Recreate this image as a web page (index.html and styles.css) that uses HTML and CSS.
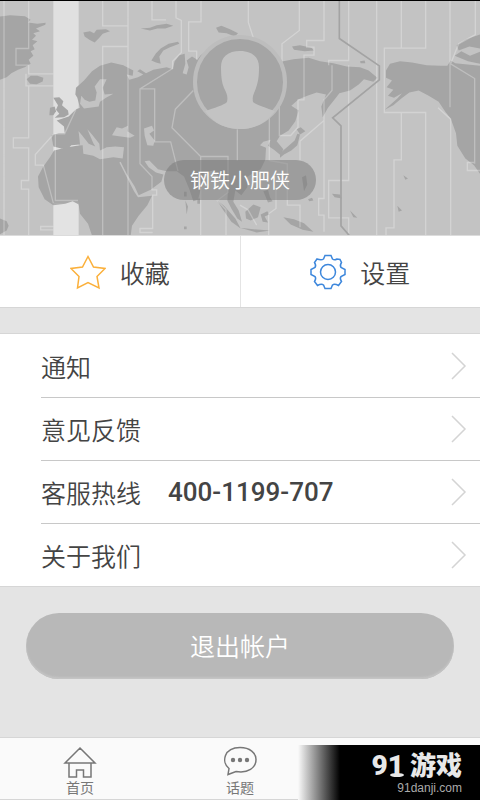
FILE: index.html
```html
<!DOCTYPE html>
<html lang="zh-CN">
<head>
  <meta charset="UTF-8">
  <meta name="viewport" content="width=device-width, initial-scale=1.0">
  <title>个人中心</title>
  <link rel="stylesheet" href="styles.css">
</head>
<body>

  <header class="profile">
    <svg class="map" viewBox="0 0 1440 705" preserveAspectRatio="xMidYMid slice" aria-hidden="true">
      <rect class="sea" width="1440" height="705"/>
      <rect class="band" x="160" width="76" height="705"/>
      <!-- land -->
      <g class="land">
        <path d="M0 48L30 44L75 47L92 58L84 66L112 70L137 67L136 73L108 84L120 92L100 98L108 106L96 118L112 122L98 134L104 146L92 152L100 166L86 178L92 190L74 200L54 208L34 218L20 230L0 238Z"/>
        <path d="M80 236L92 226L112 226L130 232L128 243L110 251L90 250Z"/>
        <path d="M0 654L20 662L26 676L20 690L0 701Z"/>
        <path d="M250 96L270 92L282 98L290 88L318 86L330 92L308 100L298 112L284 126L268 118L254 108Z"/>
        <path d="M422 84L450 82L470 74L500 70L520 76L496 84L472 84L450 90Z"/>
        <path d="M454 180L468 158L482 144L506 130L534 124L538 130L510 140L490 150L478 168L482 190L468 186Z"/>
        <path d="M648 82L664 76L690 86L714 98L704 108L680 98L656 96Z"/>
        <path d="M160 292L178 290L190 302L186 314L204 330L206 342L192 350L164 352L178 340L168 328L174 314Z"/>
        <path d="M150 322L164 318L168 332L160 344L148 344Z"/>
        <path d="M228 262L252 240L276 212L300 196L334 186L370 194L400 210L398 226L380 222L388 238L414 230L430 222L412 212L420 206L438 218L460 208L500 200L518 206L524 182L538 164L554 160L556 190L548 218L560 222L566 200L560 180L576 168L592 178L602 164L622 150L660 132L700 122L724 126L756 130L770 150L806 160L822 172L842 184L880 176L926 172L960 182L1000 188L1040 198L1080 200L1106 210L1132 232L1120 244L1092 236L1076 252L1050 270L1018 278L1006 294L984 322L968 350L964 318L978 282L950 276L922 286L896 296L874 316L896 330L886 362L866 390L840 406L830 422L850 446L842 464L822 448L804 436L812 418L790 424L780 434L798 442L796 478L782 506L756 520L740 530L742 560L724 584L706 570L700 604L716 630L726 664L712 654L694 624L682 600L684 566L664 536L640 510L612 516L606 552L594 598L580 602L568 566L552 528L530 512L500 512L474 506L448 480L434 482L446 500L468 516L490 522L484 544L452 568L416 584L404 558L380 520L362 484L358 486L402 572L414 590L456 586L442 614L416 646L396 676L392 705L276 705L264 670L240 640L236 612L218 602L196 610L160 614L134 596L116 560L114 528L130 498L150 470L162 450L196 442L230 436L248 434L250 460L280 466L300 476L340 470L368 474L372 440L346 438L320 440L300 450L298 430L276 402L262 386L280 428L286 438L266 430L246 404L236 392L240 432L214 434L208 440L184 444L160 438L154 404L176 398L194 398L192 378L170 360L206 348L228 326L240 322L232 292L226 282Z"/>
        <path d="M876 138L900 134L934 142L942 150L914 152L882 148ZM1080 182L1094 180L1096 188L1082 188Z"/>
        <path d="M840 458L866 436L884 420L892 400L900 402L892 434L874 450L852 462L840 472ZM890 386L902 380L916 392L900 402Z"/>
        <path d="M1158 210L1170 190L1200 182L1236 186L1280 194L1322 196L1342 196L1352 180L1366 188L1440 196V520L1422 494L1396 474L1372 436L1368 398L1352 354L1336 334L1316 304L1286 286L1256 270L1228 276L1204 294L1180 314L1154 328L1192 294L1206 278L1182 292L1164 286L1180 268L1160 260L1176 240L1158 232Z"/>
        <path d="M1370 134L1398 116L1440 102V144L1408 138L1376 150ZM1364 166L1384 152L1410 166L1440 154V190L1404 182Z"/>
        <path d="M650 598L672 616L706 654L722 684L694 664L668 626ZM736 634L760 612L782 620L774 650L752 660L738 654ZM782 642L802 632L808 642L794 648L804 666L788 664ZM850 650L882 656L912 668L940 694L908 688L872 672ZM720 682L760 686L810 690L770 696ZM790 572L804 568L810 590L818 602L804 606ZM924 596L936 592L940 600L928 602Z"/>
        <path d="M1210 524L1224 534L1216 538ZM1192 616L1206 630L1196 634ZM1050 630L1072 652L1060 650ZM996 580L1020 582L1026 594L1004 590ZM552 574H560V588H552ZM556 600L564 618L560 642ZM592 594H600V610H592ZM552 678H560V686H552ZM906 530L918 524L922 552L912 572Z"/>
      </g>
      <!-- inland seas -->
      <g class="sea">
        <path d="M244 286L254 298L268 304L286 300L290 276L284 258L300 236L320 236L308 262L314 282L340 280L318 292L300 304L296 318L252 324L240 310Z"/>
        <path d="M336 404L350 380L366 384L384 376L382 392L404 406L390 412L362 408Z"/>
        <path d="M432 384L456 376L462 390L448 400L464 420L460 436L442 434L434 406Z"/>
      </g>
      <rect class="glow" x="160" y="606" width="76" height="99"/>
      <!-- time zones -->
      <path class="zone" d="M12 0V705M86 0V144H48V194H86V220H160M78 220V256H160M86 256V412H40V442H86V540H64V566H86V705M308 0V76H384M384 0V705M384 138H308V705M456 0V58H498M528 0V52L544 60V156L518 182V204L420 265V490L456 528V568H470V584H458V684H420V696H458M420 265H464V424H512L534 512M603 0V64H566V152H590V178M160 402L106 462V494H130L160 608M228 326L194 400H166V600H234M160 678H122V688H160M580 270L526 326L516 382L602 468V705M602 468H684V576L652 600L678 628V705M712 386V480M745 0V66L760 112M898 0V90L846 130V212H814V238H838V405H872L894 380V298H912V164H942V140H920V120H972V0M768 276H808V480L862 490V614H900V680M1046 0V180H986V194M996 194V270L972 298V360L900 422V480M972 360V594H956V644H972V694M1046 194V540H986V652H1046V705M1130 0V705M1204 0V143M1277 0V143H1153V336H1277V705M1204 336V478H1182V682H1158V705M1350 0V320M1352 190L1424 234V490M1352 190L1376 130L1426 102V0M1314 322L1352 356V705M1426 486H1402V510H1440M828 560V624L806 640V705M720 614L744 628L770 674"/>
      <path class="dateline" d="M1018 0V114L1138 196V238L998 352L1023 376V676L1048 705"/>
    </svg>
    <svg class="avatar" viewBox="0 0 96 96" role="img" aria-label="头像">
      <circle class="avatar-ring" cx="48" cy="48" r="45"/>
      <path class="avatar-person" d="M48 17C36 17 29 23 29 33C29 44 30 49 32 54C35 60 36 62 35 68C32 71 22 74 13 77C22 90 35 95 48 95C61 95 74 90 83 77C74 74 64 71 61 68C60 62 62 60 64 54C66 48 67 43 67 33C67 23 60 17 48 17Z"/>
    </svg>
    <div class="nickname">钢铁小肥侠</div>
  </header>

  <main>
    <div class="shortcuts">
      <a class="shortcut" href="#favorites">
        <svg class="shortcut-icon star" viewBox="0 0 36 36" aria-hidden="true">
          <path d="M18 2.500L23.500 13L35 14.500L27 22.500L29 34L18 28.500L7.500 34L9 22.500L1 14.500L12.500 13Z"/>
        </svg>
        收藏
      </a>
      <a class="shortcut" href="#settings">
        <svg class="shortcut-icon gear" viewBox="0 0 36 36" aria-hidden="true">
          <circle cx="18" cy="18" r="7.500"/>
          <path d="M15 1.500H21L22.500 5Q24.500 6.500 27 5L30 5.500L31.500 8.500Q29.500 11.500 31 13.500L35 15.500V20.500L31 22.500Q29.500 24.500 31.500 27.500L28.500 31.500Q24.500 29.500 22.500 31L21 34.500H15L13.500 31Q11.500 29.500 7.500 31.500L4.500 27.500Q6.500 24.500 5 22.500L1 20.500V15.500L5 13.500Q6.500 11.500 4.500 8.500L7 5Q11.500 6.500 13.500 5Z"/>
        </svg>
        设置
      </a>
    </div>

    <nav class="menu">
      <a class="menu-item" href="#notice">
        <span>通知</span>
        <svg class="arrow" viewBox="0 0 16 28" aria-hidden="true"><path d="M1 1L14 14L1 27"/></svg>
      </a>
      <a class="menu-item" href="#feedback">
        <span>意见反馈</span>
        <svg class="arrow" viewBox="0 0 16 28" aria-hidden="true"><path d="M1 1L14 14L1 27"/></svg>
      </a>
      <a class="menu-item" href="tel:4001199707">
        <span>客服热线</span>
        <span class="phone">400-1199-707</span>
        <svg class="arrow" viewBox="0 0 16 28" aria-hidden="true"><path d="M1 1L14 14L1 27"/></svg>
      </a>
      <a class="menu-item" href="#about">
        <span>关于我们</span>
        <svg class="arrow" viewBox="0 0 16 28" aria-hidden="true"><path d="M1 1L14 14L1 27"/></svg>
      </a>
    </nav>

    <button class="logout" type="button">退出帐户</button>
  </main>

  <footer class="tabbar">
    <a class="tab" href="#home">
      <svg class="tab-icon" viewBox="0 0 34 32" aria-hidden="true">
        <path d="M17 2L32 17H2ZM6 17V31H13.500V24H20.500V31H28V17"/>
      </svg>
      首页
    </a>
    <a class="tab" href="#topics">
      <svg class="tab-icon" viewBox="0 0 34 32" aria-hidden="true">
        <path d="M5 28.500L6 22.500C-2 16 1 1.500 17 1.500C27 1.500 33 7 33 13.500C33 22 25 27.500 13 25.500Z"/>
        <g class="dots"><circle cx="10" cy="14" r="2.200"/><circle cx="17" cy="14" r="2.200"/><circle cx="24" cy="14" r="2.200"/></g>
      </svg>
      话题
    </a>
    <div class="watermark">
      <div class="brand"><span class="brand-number">91</span><span>游戏</span></div>
      <div class="brand-site">91danji.com</div>
    </div>
  </footer>

</body>
</html>
```

FILE: styles.css
```css
* {
  box-sizing: border-box;
}

body {
  margin: 0;
  min-height: 100vh;
  display: flex;
  flex-direction: column;
  font-family: Roboto, "Noto Sans CJK SC", sans-serif;
  font-size: 25px;
  font-weight: 350;
  color: #444;
  background-color: #e4e4e4;
}

a {
  color: inherit;
  text-decoration: none;
}

svg {
  fill: none;
  flex-shrink: 0;
}

/* profile header */
.profile {
  position: relative;
  height: 236px;
  padding-top: 33px;
  display: flex;
  flex-direction: column;
  align-items: center;
  gap: 30px;
  border-top: 1px solid #000;
  border-bottom: 1px solid #dcdcdc;
}

.map {
  position: absolute;
  top: 0;
  left: 0;
  width: 100%;
  height: 100%;
}

.sea {
  fill: #c3c3c3;
}

.band {
  fill: #e0e0e0;
}

.glow {
  fill: #fff;
  opacity: 0.1;
}

.land {
  fill: #a5a5a5;
}

.zone {
  stroke: #fff;
  stroke-width: 4;
  opacity: 0.28;
}

.dateline {
  stroke: #a3a3a3;
  stroke-width: 5;
}

.avatar {
  position: relative;
  width: 96px;
  height: 96px;
}

.avatar-ring {
  fill: #a5a5a5;
  stroke: #bdbdbd;
  stroke-width: 4;
}

.avatar-person {
  fill: #c3c3c3;
}

.nickname {
  position: relative;
  height: 40px;
  padding: 0 26px;
  border-radius: 20px;
  font-size: 20px;
  line-height: 42px;
  color: #fff;
  background-color: rgba(120, 120, 120, 0.5);
}

/* favorites / settings */
.shortcuts {
  display: flex;
  background-color: #fff;
  border-bottom: 1px solid #d6d6d6;
}

.shortcut {
  flex: 1;
  height: 71px;
  display: flex;
  justify-content: center;
  align-items: center;
  gap: 14px;
}

.shortcut + .shortcut {
  border-left: 1px solid #e4e4e4;
}

.shortcut-icon {
  width: 36px;
  height: 36px;
  stroke-width: 1.5;
}

.star {
  stroke: #fbb03b;
}

.gear {
  stroke: #3d87dc;
}

/* menu */
.menu {
  margin-top: 25px;
  padding-left: 41px;
  background-color: #fff;
  border-top: 1px solid #d6d6d6;
  border-bottom: 1px solid #d6d6d6;
}

.menu-item {
  height: 63px;
  padding-right: 13px;
  display: flex;
  align-items: center;
  gap: 27px;
}

.menu-item + .menu-item {
  border-top: 1px solid #c8c8c8;
}

.phone {
  font-size: 26px;
  font-weight: 500;
}

.arrow {
  width: 16px;
  height: 28px;
  margin-left: auto;
  stroke: #d4d4d4;
  stroke-width: 1.5;
}

/* logout */
.logout {
  display: block;
  width: calc(100% - 52px);
  height: 66px;
  margin: 26px auto;
  padding: 0 0 2px;
  border: none;
  border-radius: 33px;
  font: inherit;
  color: #fff;
  background-color: #b8b8b8;
  box-shadow: inset 0 -2px 2px #c4c4c4;
  cursor: pointer;
}

/* bottom tabs */
.tabbar {
  position: relative;
  height: 63px;
  margin-top: auto;
  display: grid;
  grid-template-columns: repeat(3, 1fr);
  border-top: 1px solid #d6d6d6;
  border-bottom: 1px solid #d6d6d6;
  background-color: #fafafa;
}

.tab {
  padding-top: 8px;
  display: flex;
  flex-direction: column;
  align-items: center;
  font-size: 14px;
  font-weight: 400;
  line-height: 20px;
  color: #777;
}

.tab-icon {
  width: 34px;
  height: 32px;
  stroke: #777;
  stroke-width: 1.5;
}

.dots {
  fill: #777;
  stroke: none;
}

.watermark {
  position: absolute;
  right: 0;
  bottom: -1px;
  width: 182px;
  height: 55px;
  padding: 6px 18px 0 0;
  display: flex;
  flex-direction: column;
  align-items: flex-end;
  background: linear-gradient(to right, #fafafa, #000 42px);
}

.brand {
  display: flex;
  gap: 6px;
  font-size: 26px;
  font-weight: 900;
  line-height: 30px;
  color: #e8e8e8;
}

.brand-number {
  position: relative;
  font-size: 28px;
}

/* swoosh under the 1 */
.brand-number::after {
  content: "";
  position: absolute;
  right: 0;
  bottom: 4px;
  width: 14px;
  height: 4px;
  border-radius: 50%;
  background-color: #e8e8e8;
}

.brand-site {
  font-family: "Liberation Sans", sans-serif;
  font-size: 12px;
  font-weight: 400;
  line-height: 14px;
  color: #aaa;
}
```
